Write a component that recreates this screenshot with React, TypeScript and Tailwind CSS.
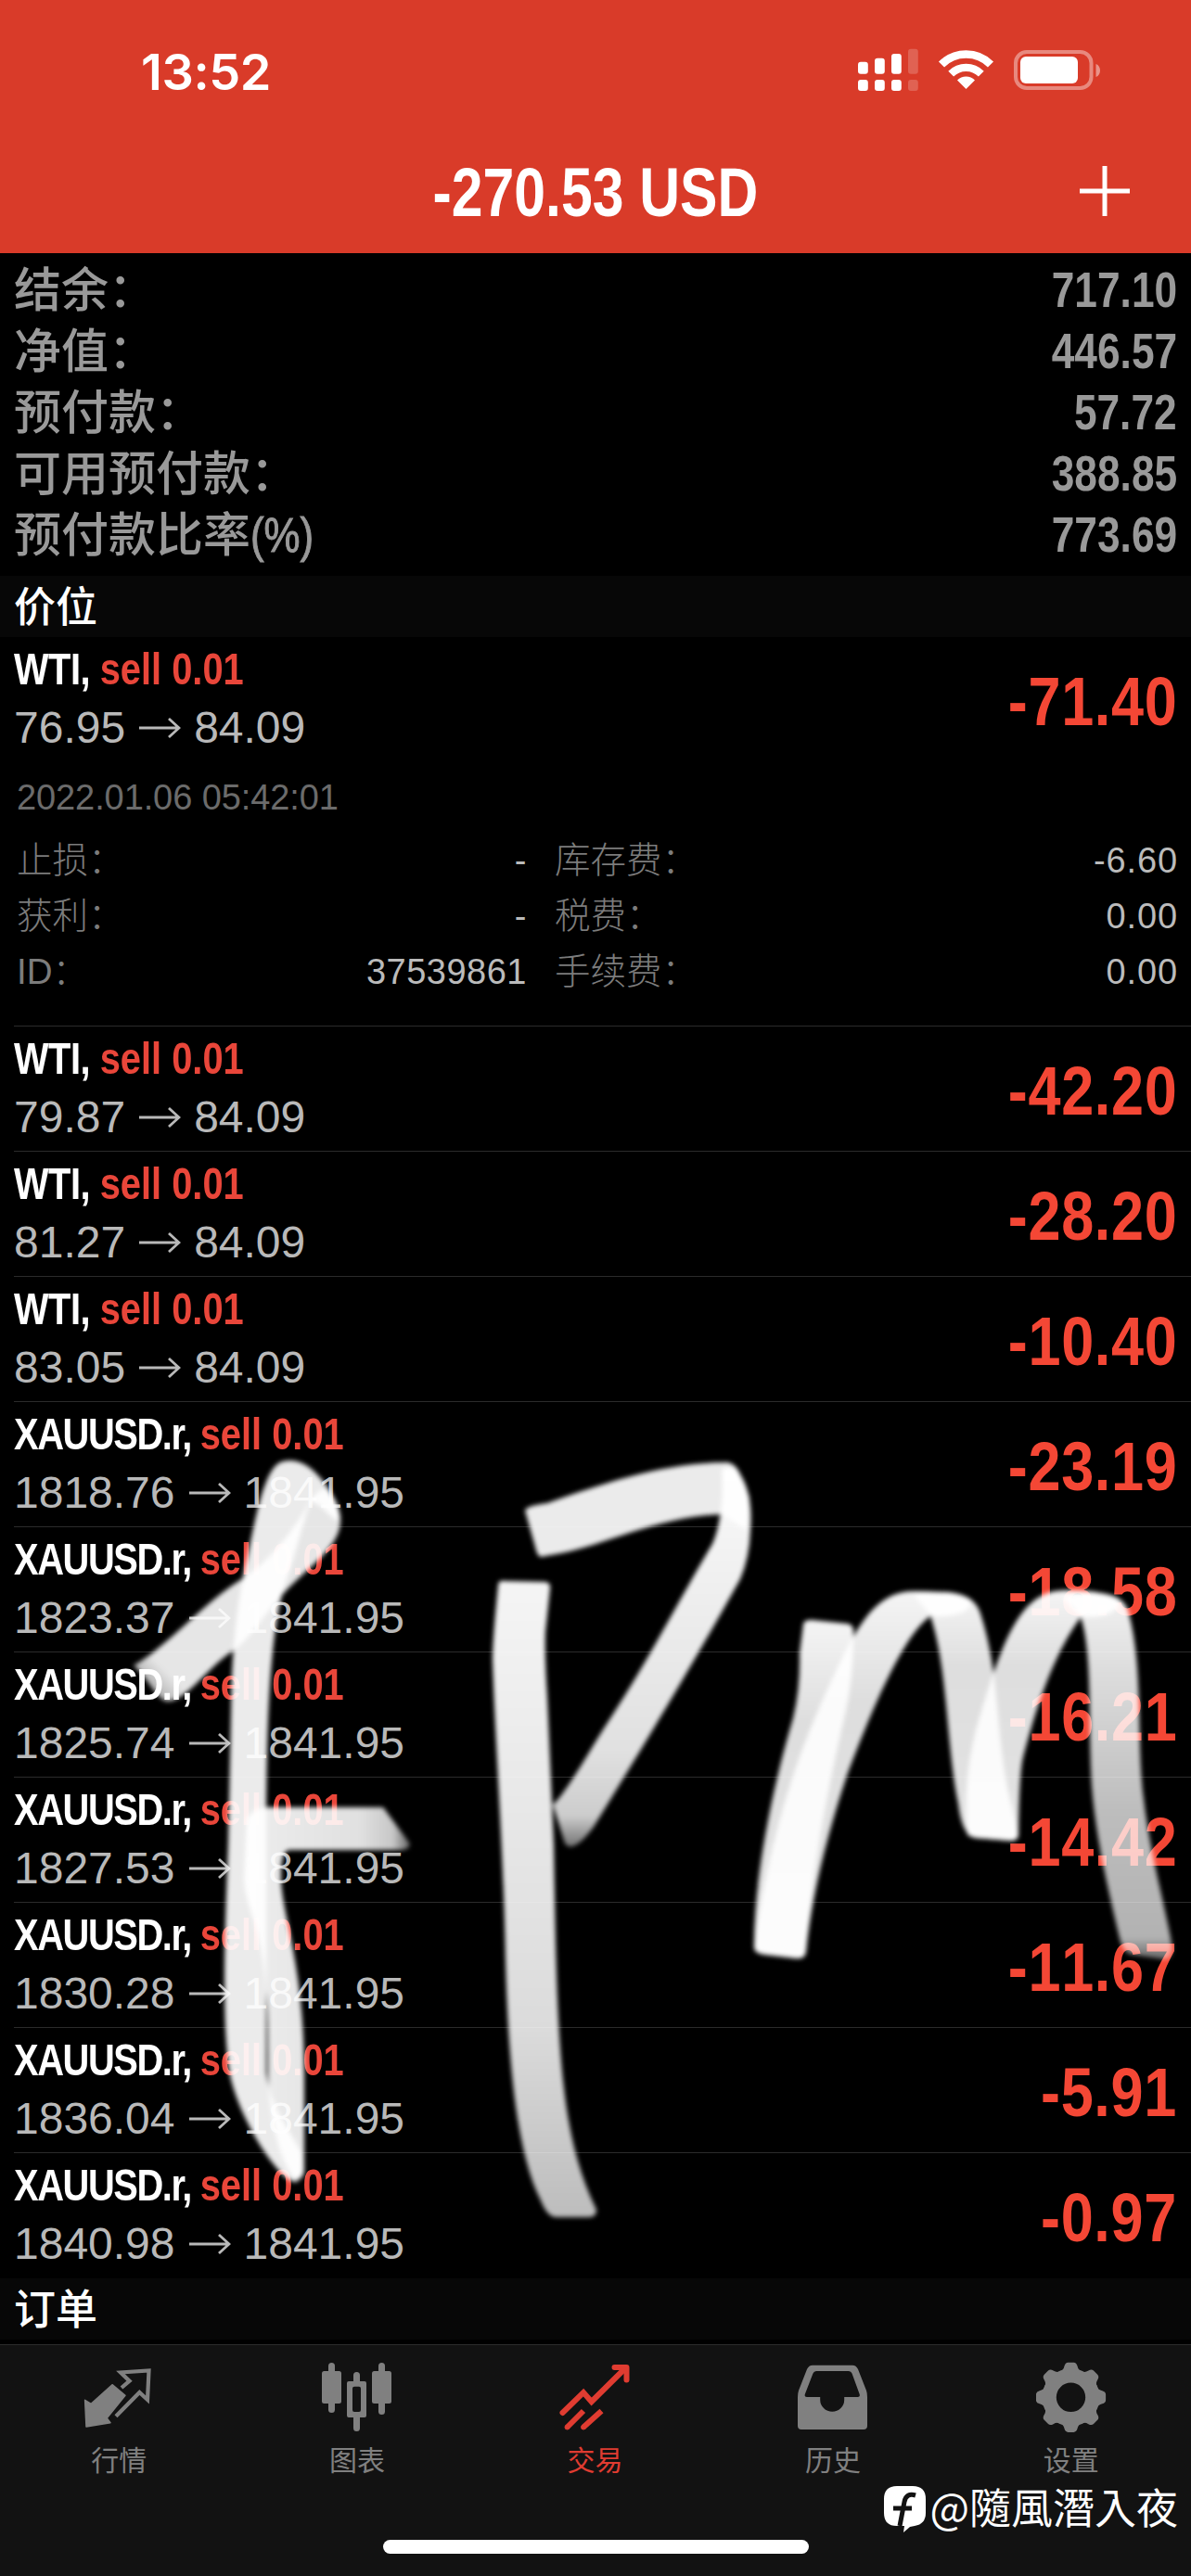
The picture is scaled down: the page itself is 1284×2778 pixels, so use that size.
import type { ReactNode } from "react"

interface Position {
  symbol: string,
  open: string,
  profit: string,
}

const summary = [
  { label: '结余：', unit: '', value: '717.10' },
  { label: '净值：', unit: '', value: '446.57' },
  { label: '预付款：', unit: '', value: '57.72' },
  { label: '可用预付款：', unit: '', value: '388.85' },
  { label: '预付款比率', unit: '(%)', value: '773.69' },
];

const positions: Position[] = [
  { symbol: 'WTI', open: '79.87', profit: '-42.20' },
  { symbol: 'WTI', open: '81.27', profit: '-28.20' },
  { symbol: 'WTI', open: '83.05', profit: '-10.40' },
  { symbol: 'XAUUSD.r', open: '1818.76', profit: '-23.19' },
  { symbol: 'XAUUSD.r', open: '1823.37', profit: '-18.58' },
  { symbol: 'XAUUSD.r', open: '1825.74', profit: '-16.21' },
  { symbol: 'XAUUSD.r', open: '1827.53', profit: '-14.42' },
  { symbol: 'XAUUSD.r', open: '1830.28', profit: '-11.67' },
  { symbol: 'XAUUSD.r', open: '1836.04', profit: '-5.91' },
  { symbol: 'XAUUSD.r', open: '1840.98', profit: '-0.97' },
];

const details = [
  ['止损：', '-', '库存费：', '-6.60'],
  ['获利：', '-', '税费：', '0.00'],
  ['ID：', '37539861', '手续费：', '0.00'],
];

const currentPrice: Record<string, string> = {
  'WTI': '84.09',
  'XAUUSD.r': '1841.95',
};

function StatusBar() {
  return (
    <div className="flex h-[154px] items-start justify-between pl-[152px] pr-[97px] pt-[47px] text-white">
      <span className="font-['Inter',sans-serif] text-[54px] font-semibold leading-[61px] tracking-[-0.4px]">13:52</span>
      <svg width="262" height="56" viewBox="925 47 262 56" fill="#fff">
        <rect x="925" y="66.7" width="10.8" height="13" rx="3" />
        <rect x="943" y="62.7" width="10.8" height="17" rx="3" />
        <rect x="961" y="58" width="10.8" height="21.7" rx="3" />
        <rect x="979" y="52.7" width="10.8" height="27" rx="3" opacity="0.2" />
        <rect x="925" y="86" width="10.8" height="12" rx="3" />
        <rect x="943" y="86" width="10.8" height="12" rx="3" />
        <rect x="961" y="86" width="10.8" height="12" rx="3" />
        <rect x="979" y="86" width="10.8" height="12" rx="3" opacity="0.2" />
        <path d="M1015 69.5A37.5 37.5 0 0 1 1068 69.5" fill="none" stroke="#fff" strokeWidth="8.6" />
        <path d="M1025.2 79.7A23 23 0 0 1 1057.8 79.7" fill="none" stroke="#fff" strokeWidth="8.2" />
        <path d="M1032 86.5A13.5 13.5 0 0 1 1051 86.5L1041.5 96Z" />
        <rect x="1095" y="56" width="81.5" height="39" rx="12" fill="none" stroke="#fff" strokeWidth="4" opacity="0.4" />
        <rect x="1100" y="61" width="62" height="29" rx="6" />
        <path d="M1181.500 69C1187.500 71 1187.500 81 1181.500 83Z" opacity="0.45" />
      </svg>
    </div>
  );
}

function Arrow() {
  return (
    <svg className="mx-[14px] inline-block" width="46" height="24" viewBox="0 0 46 24" fill="none" stroke="#b9b9b9" strokeWidth="2.8">
      <path d="M1 12H44M33 2L44 12L33 22" />
    </svg>
  );
}

function PositionHead({ symbol, open, profit }: Position) {
  return (
    <div className="flex h-[134px] justify-between pr-[15px] pt-[3px]">
      <div>
        <div className="origin-left scale-x-[0.83] whitespace-pre text-[48px] font-bold leading-[63px]">
          <span className={symbol === 'WTI' ? 'tracking-[-0.6px] text-white' : 'tracking-[-1.7px] text-white'}>{symbol}, </span>
          <span className="text-[#e9463a]">sell 0.01</span>
        </div>
        <div className="flex items-center text-[48px] leading-[63px] text-[#b9b9b9]">
          <span>{open}</span>
          <Arrow />
          <span>{currentPrice[symbol]}</span>
        </div>
      </div>
      <span className="origin-right scale-x-[0.84] text-[75px] font-bold leading-[132px] tracking-[0.8px] text-[#f44735] [font-kerning:none]">{profit}</span>
    </div>
  );
}

function SectionTitle({ children }: { children: ReactNode }) {
  return (
    <div className="h-[66px] bg-[#070707] pl-[15px] pt-[4px] text-[45px] font-medium leading-[62px] text-white">{children}</div>
  );
}

function QuotesIcon() {
  return (
    <svg width="76" height="80" viewBox="0 0 76 80">
      <path d="M31 26.700L45 38.300L25.200 62.700L29 67.700L3 72L1.600 43.300L8.200 47.300Z" fill="currentColor" stroke="currentColor" strokeWidth="1.5" strokeLinejoin="round" />
      <path d="M41 30L49.600 22.700L40 13.500L70.500 11.500L69 43L60.400 35L35 60.700" fill="none" stroke="currentColor" strokeWidth="4.2" />
    </svg>
  );
}

function ChartIcon() {
  return (
    <svg width="76" height="80" viewBox="0 0 76 80" fill="currentColor">
      <rect x="0" y="12" width="21" height="35" rx="2.500" />
      <rect x="7" y="3" width="7" height="54" rx="3.500" />
      <path fillRule="evenodd" d="M29 23H46Q48 23 48 25V60Q48 62 46 62H29Q27 62 27 60V25Q27 23 29 23ZM35 28.700Q33 28.700 33 30.700V54Q33 56 35 56H40Q42 56 42 54V30.700Q42 28.700 40 28.700Z" />
      <path d="M34 24V16.500A3.500 3.500 0 0 1 41 16.500V24ZM34 61V73.500A3.500 3.500 0 0 0 41 73.500V61Z" />
      <rect x="54" y="12" width="21" height="35" rx="2.500" />
      <rect x="61" y="3" width="7" height="56" rx="3.500" />
    </svg>
  );
}

function TradeIcon() {
  return (
    <svg width="76" height="80" viewBox="0 0 76 80" fill="none" stroke="currentColor" strokeWidth="6">
      <path d="M3.500 57L26 35L34.700 45L71 9" strokeLinecap="round" />
      <path d="M59.500 8H72.500V21.500" strokeLinecap="round" strokeLinejoin="round" />
      <path d="M8.500 72.500L26 55M26 72.500L45.500 55" />
      <circle cx="8.500" cy="72.500" r="2.500" fill="currentColor" strokeWidth="1" />
      <circle cx="26" cy="72.500" r="2.500" fill="currentColor" strokeWidth="1" />
    </svg>
  );
}

function HistoryIcon() {
  return (
    <svg width="76" height="80" viewBox="0 0 76 80" fill="currentColor">
      <path fillRule="evenodd" d="M16 5.700H59Q63 5.700 65 10L74 33Q75 36 75 40V71Q75 75 71 75H4Q0 75 0 71V40Q0 36 1 33L10 10Q12 5.700 16 5.700ZM20 12Q17.500 12 16.500 14.500L7.800 37Q7 40 10 40H24.200V43A13 12.700 0 0 0 50.200 43V40H64.500Q67.500 40 66.700 37L58.500 14.500Q57.500 12 55 12Z" />
    </svg>
  );
}

function SettingsIcon() {
  return (
    <svg width="76" height="80" viewBox="0 0 76 80">
      <circle cx="37.500" cy="40.300" r="23.300" fill="none" stroke="currentColor" strokeWidth="15.200" />
      {[0, 45, 90, 135, 180, 225, 270, 315].map((angle) => (
        <path
          key={angle}
          d="M26 12Q29.500 11 30.500 6.500Q31.500 2.700 34.500 2.700H40.500Q43.500 2.700 44.500 6.500Q45.500 11 49 12L46 18H29Z"
          fill="currentColor"
          transform={`rotate(${angle} 37.5 40.3)`}
        />
      ))}
    </svg>
  );
}

const tabs = [
  { label: '行情', icon: <QuotesIcon /> },
  { label: '图表', icon: <ChartIcon /> },
  { label: '交易', icon: <TradeIcon />, active: true },
  { label: '历史', icon: <HistoryIcon /> },
  { label: '设置', icon: <SettingsIcon /> },
];

// Marker strokes drawn over the list
function Handwriting() {
  return (
    <svg className="pointer-events-none absolute left-0 top-0" width="1284" height="2778" viewBox="0 0 1284 2778">
      <defs>
        <filter id="soft" x="-5%" y="-5%" width="110%" height="110%">
          <feGaussianBlur stdDeviation="2.4" />
        </filter>
        <linearGradient id="stem" x1="0" y1="0" x2="0" y2="1">
          <stop offset="0" stopColor="#fff" stopOpacity="0.96" />
          <stop offset="0.7" stopColor="#fff" stopOpacity="0.86" />
          <stop offset="1" stopColor="#fff" stopOpacity="0.74" />
        </linearGradient>
        <linearGradient id="bowl" x1="0" y1="0" x2="0" y2="1">
          <stop offset="0" stopColor="#fff" stopOpacity="0.98" />
          <stop offset="0.75" stopColor="#fff" stopOpacity="0.88" />
          <stop offset="0.92" stopColor="#fff" stopOpacity="0.8" />
          <stop offset="1" stopColor="#fff" stopOpacity="0.45" />
        </linearGradient>
        <linearGradient id="tail" x1="0" y1="0" x2="0" y2="1">
          <stop offset="0" stopColor="#fff" stopOpacity="0.95" />
          <stop offset="0.2" stopColor="#fff" stopOpacity="0.87" />
          <stop offset="0.6" stopColor="#fff" stopOpacity="0.74" />
          <stop offset="0.94" stopColor="#fff" stopOpacity="0.7" />
          <stop offset="1" stopColor="#fff" stopOpacity="0.4" />
        </linearGradient>
        <linearGradient id="leg" x1="0" y1="0" x2="0" y2="1">
          <stop offset="0" stopColor="#fff" stopOpacity="0.96" />
          <stop offset="0.3" stopColor="#fff" stopOpacity="0.87" />
          <stop offset="1" stopColor="#fff" stopOpacity="0.89" />
        </linearGradient>
        <linearGradient id="flag" x1="1" y1="0" x2="0" y2="1">
          <stop offset="0" stopColor="#fff" stopOpacity="0.9" />
          <stop offset="0.85" stopColor="#fff" stopOpacity="0.9" />
          <stop offset="1" stopColor="#fff" stopOpacity="0.5" />
        </linearGradient>
        <linearGradient id="cross" x1="0" y1="0" x2="1" y2="0">
          <stop offset="0" stopColor="#fff" stopOpacity="0.93" />
          <stop offset="0.7" stopColor="#fff" stopOpacity="0.88" />
          <stop offset="0.9" stopColor="#fff" stopOpacity="0.78" />
          <stop offset="1" stopColor="#fff" stopOpacity="0.4" />
        </linearGradient>
      </defs>
      <g filter="url(#soft)">
        <path fill="url(#flag)" d="M144 1796C175 1780 222 1727 256 1706C290 1685 312 1655 328 1630Q340 1605 352 1606Q367 1620 367 1642C365 1670 332 1690 307 1717C285 1740 268 1770 250 1781C222 1800 200 1835 180 1835C168 1832 160 1810 144 1796Z" />
        <path fill="#fff" fillOpacity="0.92" d="M267 1678C275 1640 284 1586 302 1577Q314 1572 328 1579C345 1588 366 1618 367 1638C360 1645 348 1620 335 1620C325 1645 318 1680 306 1712C290 1770 288 1860 287 1953V2235C292 2275 315 2300 325 2322Q328 2354 317 2353C298 2348 258 2285 248 2238C238 2180 243 2070 246 1990L250 1806Q254 1730 267 1678Z" />
        <path fill="url(#cross)" d="M266 1962Q272 1949 290 1949H413L441 1987Q444 1993 433 1995H312Q302 1996 303 2027C305 2070 328 2120 328 2235V2342Q326 2352 318 2349C300 2330 290 2280 289 2235C289 2180 290 2130 275 2075Q264 2045 263 2027Z" />

        <path fill="url(#stem)" d="M537 1710Q537 1704 544 1705L588 1706Q594 1707 593 1713L588 1760Q587 1785 590 1830L597 1990C599 2100 600 2180 608 2252C613 2295 622 2340 643 2383Q643 2391 635 2391H600Q590 2391 583 2373C556 2320 548 2220 545 2114C543 2000 534 1880 531 1790Q531 1770 537 1710Z" />
        <path fill="#fff" fillOpacity="0.92" d="M566 1629Q567 1624 590 1621C650 1600 715 1577 785 1577Q793 1579 797 1588L808 1615L805 1650L778 1633C710 1635 650 1667 605 1675L583 1679Q579 1678 577 1668Z" />
        <path fill="url(#bowl)" d="M778 1584Q793 1578 798 1590Q812 1612 809 1650Q808 1680 798 1703C755 1780 705 1865 640 1970Q618 2000 609 1988L596 1946C610 1935 640 1880 660 1850C705 1780 735 1720 768 1665Q781 1635 778 1584Z" />

        <path fill="url(#leg)" d="M866 1752Q866 1747 875 1747L914 1751Q921 1753 920 1760Q920 1810 912 1845C892 1930 875 2020 869 2104Q868 2113 859 2112L825 2108Q812 2107 813 2098C813 2020 835 1920 855 1853Q863 1820 862 1783Z" />
        <path fill="url(#leg)" d="M813 2098C825 2010 848 1920 886 1835C920 1760 940 1716 985 1716Q1030 1715 1047 1726Q1046 1745 1003 1743C970 1765 930 1870 913 1915C888 1990 875 2050 869 2104Q868 2113 859 2112L825 2108Q812 2107 813 2098Z" />
        <path fill="url(#leg)" d="M985 1720Q1047 1708 1057 1740C1080 1810 1072 1880 1092 1952L1098 1979Q1097 1986 1088 1985L1051 1982Q1037 1979 1033 1945C1020 1880 1022 1800 1003 1742Z" />
        <path fill="url(#leg)" d="M1043 1979C1039 1930 1044 1890 1058 1845C1085 1755 1105 1716 1147 1715Q1190 1714 1207 1726Q1206 1745 1165 1744C1132 1790 1115 1850 1103 1895Q1099 1910 1098 1979Q1097 1986 1088 1985L1051 1982Z" />
        <path fill="url(#tail)" d="M1145 1722Q1210 1708 1217 1740C1233 1800 1225 1880 1233 1940C1240 2000 1255 2050 1264 2100Q1263 2114 1255 2113L1222 2108Q1213 2108 1208 2094C1195 2040 1181 1980 1177 1926C1173 1860 1178 1780 1165 1744Z" />
      </g>
    </svg>
  );
}

export default function App() {
  return (
    <div className="relative flex h-[2778px] w-[1284px] flex-col overflow-hidden bg-black font-['Liberation_Sans','Noto_Sans_CJK_SC',sans-serif]">
      <header className="h-[273px] shrink-0 bg-[#d93b29]">
        <StatusBar />
        <div className="grid grid-cols-[120px_1fr_120px] items-center text-white">
          <span />
          <h1 className="scale-x-[0.82] text-center text-[74px] font-bold leading-[108px]">-270.53 USD</h1>
          <svg className="-mt-[4px]" width="54" height="54" viewBox="0 0 54 54" stroke="#fff" strokeWidth="5">
            <path d="M27 0V54M0 27H54" />
          </svg>
        </div>
      </header>

      <section className="h-[348px] shrink-0 px-[15px] pt-[7px] text-[#999]">
        {summary.map((row) => (
          <div key={row.label} className="flex h-[66px] items-baseline justify-between">
            <span className="text-[51px] font-medium leading-[66px]">
              {row.label}
              <span className="inline-block origin-left scale-x-[0.86] [-webkit-text-stroke:1px_#999]">{row.unit}</span>
            </span>
            <span className="origin-right scale-x-[0.835] text-[53px] font-bold leading-[66px] [font-kerning:none]">{row.value}</span>
          </div>
        ))}
      </section>

      <SectionTitle>价位</SectionTitle>

      <section className="ml-[15px] h-[420px] shrink-0 border-b border-[#2b2b2b]">
        <PositionHead symbol="WTI" open="76.95" profit="-71.40" />
        <div className="pl-[3px] pr-[14px] text-[38px] text-[#6b6b6b]">
          <div className="mt-[14px] leading-[50px] tracking-[-0.1px]">2022.01.06 05:42:01</div>
          <div className="mt-[13px] grid grid-cols-[550px_1fr] gap-x-[30px] leading-[60px]">
            {details.map(([left, leftValue, right, rightValue]) => (
              <div key={left} className="contents">
                <div className="flex justify-between">
                  <span className="text-[38.5px] font-light text-[#7c7c7c]">{left}</span>
                  <span className="tracking-[0.5px] text-[#bbb]">{leftValue}</span>
                </div>
                <div className="flex justify-between">
                  <span className="text-[38.5px] font-light text-[#7c7c7c]">{right}</span>
                  <span className="tracking-[0.9px] text-[#bbb]">{rightValue}</span>
                </div>
              </div>
            ))}
          </div>
        </div>
      </section>

      {positions.map((position) => (
        <section key={position.open} className="ml-[15px] h-[135px] shrink-0 border-b border-[#2b2b2b] last-of-type:border-transparent">
          <PositionHead {...position} />
        </section>
      ))}

      <SectionTitle>订单</SectionTitle>

      <nav className="mt-[5px] flex h-[250px] shrink-0 flex-col items-center border-t border-[#2c2c2c] bg-[#121212]">
        <div className="grid w-full grid-cols-5 pr-[1px] pt-[16px]">
          {tabs.map((tab) => (
            <div key={tab.label} className={tab.active ? 'flex flex-col items-center text-[#e03c31]' : 'flex flex-col items-center text-[#808080]'}>
              {tab.icon}
              <span className="mt-[7px] text-[30px] leading-[44px]">{tab.label}</span>
            </div>
          ))}
        </div>
        <div className="mt-[63px] h-[15px] w-[459px] shrink-0 rounded-full bg-white" />
      </nav>

      <Handwriting />

      {/* watermark */}
      <div className="absolute bottom-[45px] right-[14px] flex items-center text-white">
        <svg className="mr-[4px] mt-[9px]" width="45" height="52" viewBox="0 0 45 52">
          <path d="M14 0H31Q45 0 45 14V29Q45 41 33 43L28 44L21 50L22 43H14Q0 43 0 29V14Q0 0 14 0Z" fill="#fff" />
          <path d="M34 10Q24 7 22 17L17 43M10 24H30" fill="none" stroke="#121212" strokeWidth="5" />
        </svg>
        <span className="font-['Noto_Sans_CJK_TC',sans-serif] text-[45px] leading-[60px]">@隨風潛入夜</span>
      </div>
    </div>
  );
}
